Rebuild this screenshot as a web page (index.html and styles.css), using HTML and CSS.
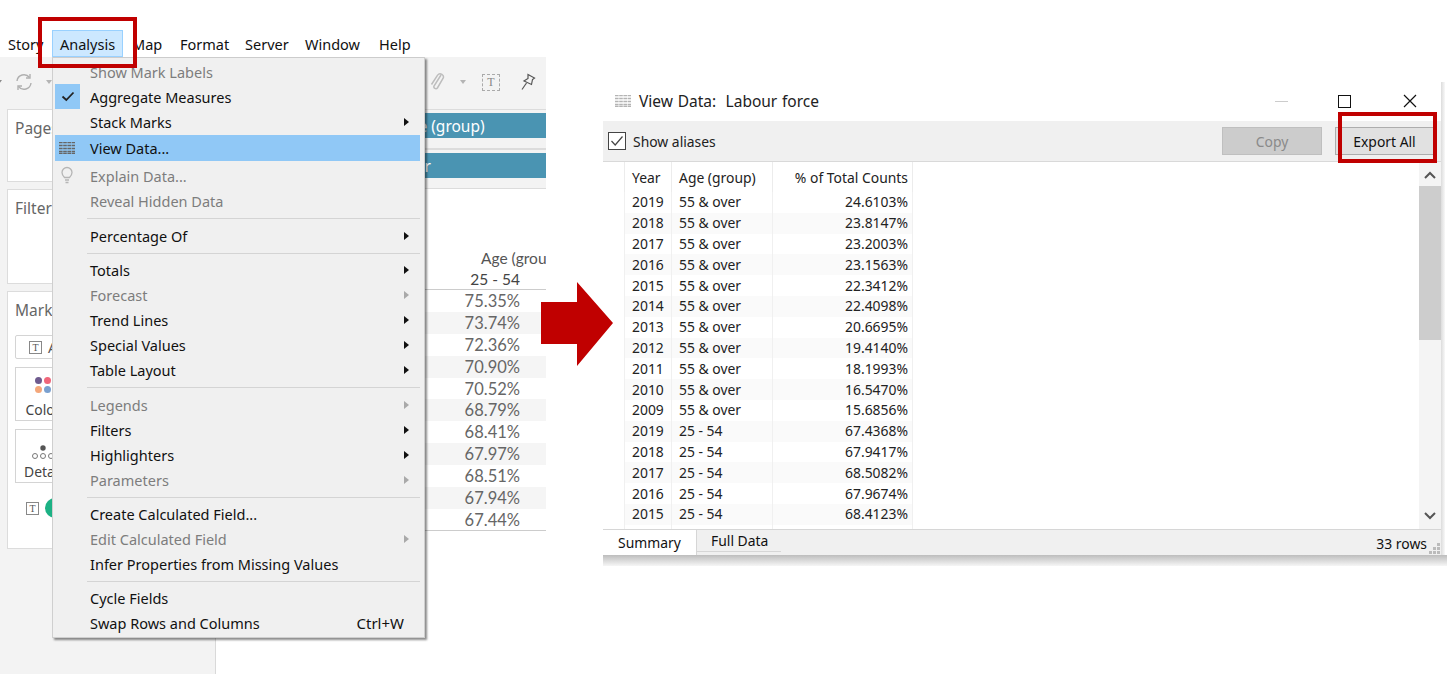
FILE: index.html
```html
<!DOCTYPE html>
<html lang="en">
<head>
<meta charset="utf-8">
<title>View Data</title>
<link rel="stylesheet" href="styles.css">
</head>
<body>
<div class="canvas">

  <section class="app">
    <nav class="menubar">
      <span class="mb-item mb-story">Story</span>
      <span class="mb-item mb-active">Analysis</span>
      <span class="mb-item mb-map">Map</span>
      <span class="mb-item mb-format">Format</span>
      <span class="mb-item mb-server">Server</span>
      <span class="mb-item mb-window">Window</span>
      <span class="mb-item mb-help">Help</span>
    </nav>
    <div class="toolbar">
      <div class="tb-left">
        <svg class="caret caret-a" width="6" height="4" viewBox="0 0 6 4"><path d="M0 0h6L3 4z" fill="#8a8a8a"/></svg>
        <svg class="refresh" width="20" height="20" viewBox="0 0 20 20" fill="none" stroke="#b0b0b0" stroke-width="1.4"><path d="M3 9a7 7 0 0 1 12.500-3.500M17 11a7 7 0 0 1-12.500 3.500"/><path d="M16 2v4h-4M4 18v-4h4"/></svg>
        <svg class="caret" width="6" height="4" viewBox="0 0 6 4"><path d="M0 0h6L3 4z" fill="#b4b4b4"/></svg>
      </div>
      <div class="tb-right">
        <svg class="clip" width="16" height="20" viewBox="0 0 16 20" fill="none" stroke="#bdbdbd" stroke-width="1.5"><path d="M12 3 5 14a2 2 0 0 0 3.400 2L14 6.500a3.200 3.200 0 0 0-5.400-3.400L2.500 12.500"/></svg>
        <svg class="caret caret-b" width="6" height="4" viewBox="0 0 6 4"><path d="M0 0h6L3 4z" fill="#b4b4b4"/></svg>
        <span class="t-box">T</span>
        <svg class="pin" width="16" height="18" viewBox="0 0 16 18" fill="#f3f3f3" stroke="#555" stroke-width="1.200"><path d="M8 1.500 14.500 5 12.500 6.500 11.500 11.500 4 8 8 5.500z"/><path d="M6.500 10 2 16.500"/></svg>
      </div>
    </div>
    <div class="workspace">
      <aside class="side">
        <div class="card card-pages"><span class="card-title">Pages</span></div>
        <div class="card card-filters"><span class="card-title">Filters</span></div>
        <div class="card card-marks">
          <span class="card-title">Marks</span>
          <div class="mark-select"><span class="t-mini">T</span><span>Automatic</span></div>
          <div class="mark-tile">
            <span class="dots"><i class="d1"></i><i class="d2"></i><i class="d3"></i><i class="d4"></i></span>
            <span class="tile-label">Color</span>
          </div>
          <div class="mark-tile">
            <svg class="detail-ic" width="24" height="18" viewBox="0 0 24 18"><circle cx="12" cy="4" r="2.700" fill="#555"/><g fill="none" stroke="#777"><circle cx="4" cy="12" r="2.500"/><circle cx="12" cy="12" r="2.500"/><circle cx="20" cy="12" r="2.500"/></g></svg>
            <span class="tile-label">Detail</span>
          </div>
          <div class="mark-pill"><span class="t-mini">T</span><span class="pill"></span></div>
        </div>
      </aside>
      <div class="view">
        <div class="shelf shelf-first"><div class="pill-teal">Age (group)</div></div>
        <div class="shelf"><div class="pill-teal">Year</div></div>
        <div class="viz">
          <div class="viz-head"><span class="viz-group">Age (group)</span></div>
          <div class="viz-sub">25 - 54</div>
          <div class="viz-row">75.35%</div>
          <div class="viz-row">73.74%</div>
          <div class="viz-row">72.36%</div>
          <div class="viz-row">70.90%</div>
          <div class="viz-row">70.52%</div>
          <div class="viz-row">68.79%</div>
          <div class="viz-row">68.41%</div>
          <div class="viz-row">67.97%</div>
          <div class="viz-row">68.51%</div>
          <div class="viz-row">67.94%</div>
          <div class="viz-row">67.44%</div>
        </div>
      </div>
    </div>
  </section>

  <div class="menu">
    <div class="mi dis">Show Mark Labels</div>
    <div class="mi"><span class="check"><svg width="14" height="11" viewBox="0 0 14 11" fill="none" stroke="#222" stroke-width="1.800"><path d="M1.500 5.500 5.300 9 12.500 1.500"/></svg></span>Aggregate Measures</div>
    <div class="mi sub">Stack Marks</div>
    <div class="mi hl"><svg class="mi-ic" width="16" height="12" viewBox="0 0 16 12"><path d="M0 .5h16M0 3.500h16M0 6.500h16M0 9.500h16M0 11.500h16" stroke="#666" stroke-width="1.400" stroke-dasharray="3.600 .6"/></svg>View Data...</div>
    <div class="mi dis mi-after"><svg class="mi-ic bulb" width="12" height="18" viewBox="0 0 12 18" fill="none" stroke="#b5b5b5" stroke-width="1.300"><path d="M3.500 11.500C2 10 1 8.800 1 6.500a5 5 0 0 1 10 0c0 2.300-1 3.500-2.500 5z"/><path d="M4 14h4M4.500 16.500h3"/></svg>Explain Data...</div>
    <div class="mi dis">Reveal Hidden Data</div>
    <hr class="sep">
    <div class="mi sub">Percentage Of</div>
    <hr class="sep sep-tight">
    <div class="mi sub">Totals</div>
    <div class="mi dis sub">Forecast</div>
    <div class="mi sub">Trend Lines</div>
    <div class="mi sub">Special Values</div>
    <div class="mi sub">Table Layout</div>
    <hr class="sep">
    <div class="mi dis sub">Legends</div>
    <div class="mi sub">Filters</div>
    <div class="mi sub">Highlighters</div>
    <div class="mi dis sub">Parameters</div>
    <hr class="sep sep-tight">
    <div class="mi">Create Calculated Field...</div>
    <div class="mi dis sub">Edit Calculated Field</div>
    <div class="mi">Infer Properties from Missing Values</div>
    <hr class="sep sep-tight">
    <div class="mi">Cycle Fields</div>
    <div class="mi"><span>Swap Rows and Columns</span><span class="shortcut">Ctrl+W</span></div>
  </div>

  <section class="dialog">
    <header class="dlg-title">
      <svg class="dlg-ic" width="16" height="12" viewBox="0 0 16 12"><path d="M0 .5h16M0 3.500h16M0 6.500h16M0 9.500h16M0 11.500h16" stroke="#b4b4b4" stroke-width="1.400" stroke-dasharray="3.600 .6"/></svg>
      <span class="dlg-name">View Data:&nbsp; Labour force</span>
      <div class="win-ctrls">
        <span class="win-min"></span>
        <span class="win-max"></span>
        <svg class="win-close" width="14" height="14" viewBox="0 0 14 14" stroke="#111" stroke-width="1.200"><path d="M1 1l12 12M13 1 1 13"/></svg>
      </div>
    </header>
    <div class="dlg-bar">
      <span class="cb"><svg width="14" height="12" viewBox="0 0 14 12" fill="none" stroke="#444" stroke-width="1.200"><path d="M1.500 6 5.200 10 12.500 1.500"/></svg></span>
      <span class="cb-label">Show aliases</span>
      <button class="btn btn-copy" type="button">Copy</button>
      <button class="btn btn-export" type="button">Export All</button>
    </div>
    <div class="dlg-body">
      <div class="table-wrap">
        <table class="data">
          <thead>
            <tr><th class="c1">Year</th><th class="c2">Age (group)</th><th class="c3">% of Total Counts</th></tr>
          </thead>
          <tbody>
            <tr><td>2019</td><td>55 &amp; over</td><td>24.6103%</td></tr>
            <tr><td>2018</td><td>55 &amp; over</td><td>23.8147%</td></tr>
            <tr><td>2017</td><td>55 &amp; over</td><td>23.2003%</td></tr>
            <tr><td>2016</td><td>55 &amp; over</td><td>23.1563%</td></tr>
            <tr><td>2015</td><td>55 &amp; over</td><td>22.3412%</td></tr>
            <tr><td>2014</td><td>55 &amp; over</td><td>22.4098%</td></tr>
            <tr><td>2013</td><td>55 &amp; over</td><td>20.6695%</td></tr>
            <tr><td>2012</td><td>55 &amp; over</td><td>19.4140%</td></tr>
            <tr><td>2011</td><td>55 &amp; over</td><td>18.1993%</td></tr>
            <tr><td>2010</td><td>55 &amp; over</td><td>16.5470%</td></tr>
            <tr><td>2009</td><td>55 &amp; over</td><td>15.6856%</td></tr>
            <tr><td>2019</td><td>25 - 54</td><td>67.4368%</td></tr>
            <tr><td>2018</td><td>25 - 54</td><td>67.9417%</td></tr>
            <tr><td>2017</td><td>25 - 54</td><td>68.5082%</td></tr>
            <tr><td>2016</td><td>25 - 54</td><td>67.9674%</td></tr>
            <tr><td>2015</td><td>25 - 54</td><td>68.4123%</td></tr>
            <tr><td></td><td></td><td></td></tr>
          </tbody>
        </table>
      </div>
      <div class="scroll">
        <svg class="sc-arrow" width="12" height="8" viewBox="0 0 12 8" fill="none" stroke="#555" stroke-width="2"><path d="M1 7l5-5 5 5"/></svg>
        <div class="sc-thumb"></div>
        <svg class="sc-arrow sc-down" width="12" height="8" viewBox="0 0 12 8" fill="none" stroke="#555" stroke-width="2"><path d="M1 1l5 5 5-5"/></svg>
      </div>
    </div>
    <footer class="dlg-foot">
      <span class="tab tab-on">Summary</span>
      <span class="tab tab-off">Full Data</span>
      <span class="rows">33 rows</span>
      <svg class="grip" width="11" height="11" viewBox="0 0 11 11" fill="#bbb"><path d="M8 0h3v3H8zM4 4h3v3H4zM8 4h3v3H8zM0 8h3v3H0zM4 8h3v3H4zM8 8h3v3H8z"/></svg>
    </footer>
  </section>

  <svg class="arrow" width="72" height="84" viewBox="0 0 72 84"><path d="M0 20h36V0l36 41-36 43V62H0z" fill="#c00000"/></svg>

  <div class="redbox redbox-menu"></div>
  <div class="redbox redbox-export"></div>
</div>
</body>
</html>
```
FILE: styles.css
```css
* { box-sizing: border-box; }
html, body { margin: 0; padding: 0; background: #fff; }
body { width: 1447px; height: 674px; overflow: hidden; font-family: "Noto Sans", "Open Sans", sans-serif; color: #111; }
.canvas { position: relative; width: 1447px; height: 674px; overflow: hidden; }

/* left application window */
.app { position: absolute; left: 0; top: 30px; width: 546px; height: 644px; display: flex; flex-direction: column; overflow: hidden; background: #fff; }
.menubar { height: 27px; display: flex; align-items: center; font-size: 14.5px; flex: none; }
.mb-item { line-height: 28px; white-space: nowrap; }
.mb-story { margin-left: 8px; width: 44px; }
.mb-active { width: 71px; padding-left: 7px; background: #cce8ff; border: 1px solid #99d1ff; line-height: 26px; height: 27px; }
.mb-map { margin-left: 9px; width: 48px; }
.mb-format { width: 65px; }
.mb-server { width: 60px; }
.mb-window { width: 74px; }

.toolbar { height: 52px; flex: none; background: #f3f3f3; display: flex; justify-content: space-between; align-items: center; padding-bottom: 2px; }
.tb-left { display: flex; align-items: center; gap: 12px; margin-left: -4px; }
.tb-right { display: flex; align-items: center; margin-right: 10px; }
.clip { margin-right: 15px; }
.caret-b { margin-right: 16px; }
.t-box { width: 18px; height: 17px; border: 1px dashed #aaa; font: 12px/15px "Liberation Serif", serif; text-align: center; color: #888; margin-right: 20px; }

.workspace { flex: 1; display: flex; min-height: 0; }
.side { width: 216px; flex: none; background: #f3f3f3; border-right: 1px solid #d9d9d9; padding: 0 0 0 7px; display: flex; flex-direction: column; gap: 7px; }
.card { background: #fff; border: 1px solid #dcdcdc; padding: 8px 7px; font-size: 14.5px; color: #555; }
.card-title { display: block; line-height: 20px; font-size: 15.5px; color: #666; }
.card-pages { height: 73px; }
.card-filters { height: 95px; }
.card-marks { height: 258px; }
.mark-select { margin-top: 15px; height: 24px; width: 190px; border: 1px solid #d4d4d4; border-radius: 2px; display: flex; align-items: center; gap: 6px; padding-left: 13px; }
.t-mini { width: 13px; height: 13px; border: 1px solid #888; font: 10px/11px "Liberation Serif", serif; text-align: center; color: #555; display: block; }
.mark-tile { width: 56px; height: 54px; margin-top: 8px; border: 1px solid #d4d4d4; display: flex; flex-direction: column; align-items: center; justify-content: flex-end; color: #444; }
.dots { display: grid; grid-template-columns: 7px 7px; gap: 2px; margin: 0 0 7px; }
.dots i { width: 7px; height: 7px; border-radius: 50%; display: block; }
.d1 { background: #6e5a8e; } .d2 { background: #f0667a; } .d3 { background: #f4a77a; } .d4 { background: #7aa0cf; }
.tile-label { line-height: 20px; font-size: 13.9px; }
.mark-pill { margin-top: 15px; margin-left: 11px; display: flex; align-items: center; gap: 6px; }
.pill { width: 60px; height: 20px; border-radius: 10px; background: #1cb184; display: block; }

.view { flex: 1; min-width: 0; display: flex; flex-direction: column; }
.shelf { height: 39px; background: #f3f3f3; border-top: 1px solid #dcdcdc; border-bottom: 1px solid #dcdcdc; padding-top: 3px; flex: none; }
.shelf + .shelf { height: 40px; }
.shelf-first { height: 40px; padding-top: 3px; }
.pill-teal { height: 25px; background: #4a94b2; color: #fff; font-size: 15.5px; line-height: 26px; margin-left: 9px; padding-left: 174px; white-space: nowrap; }
.viz { flex: 1; font-family: "Lato", "Open Sans", sans-serif; color: #666; font-size: 16.5px; }
.viz-head { height: 80px; display: flex; align-items: flex-end; padding-left: 265px; color: #555; white-space: nowrap; overflow: hidden; }
.viz-group { line-height: 22px; font-size: 15.5px; }
.viz-sub { width: 100%; height: 21px; line-height: 20px; text-align: right; padding-right: 26px; border-bottom: 1px solid #ccc; color: #444; font-size: 15.5px; }
.viz-row { height: 21.9px; line-height: 22px; text-align: right; padding-right: 26px; }
.viz-row:nth-of-type(even) { background: #f5f5f5; }
.viz-row:last-child { border-bottom: 1px solid #ccc; }

/* Analysis drop-down */
.menu { position: absolute; left: 52px; top: 57px; width: 373px; height: 581px; padding: 2px 4px 0 2px; background: #f0f0f0; border: 1px solid #cfcfcf; border-top-color: #ccc; box-shadow: 2px 2px 2px rgba(0,0,0,.45); font-size: 14.5px; }
.mi { position: relative; height: 25px; line-height: 25px; padding-left: 35px; white-space: nowrap; display: flex; align-items: center; }
.mi.dis { color: #7d7d7d; }
.mi.sub::after { content: ""; position: absolute; right: 11px; top: 8px; border-left: 5px solid #111; border-top: 4px solid transparent; border-bottom: 4px solid transparent; }
.mi.dis.sub::after { border-left-color: #a9a9a9; }
.hl { background: #90c8f6; height: 26px; margin-bottom: 3px; }
.check { position: absolute; left: 0; top: -1px; width: 25px; height: 25px; background: #90c8f6; display: flex; align-items: center; justify-content: center; }
.mi-ic { position: absolute; left: 4px; top: 7px; }
.mi-ic.bulb { left: 6px; top: 2px; }
.sep { height: 1px; border: 0; background: #d4d4d4; margin: 4px 0 5px 32px; }
.sep-tight { margin-bottom: 4px; }
.shortcut { margin-left: auto; margin-right: 16px; font-size: 15px; }

.arrow { position: absolute; left: 541px; top: 282px; }

/* View Data dialog */
.dialog { position: absolute; left: 603px; top: 82px; width: 840px; height: 474px; display: flex; flex-direction: column; background: #fff; border-right: 2px solid #a0a0a0; border-bottom: 1px solid #777; font-size: 13.9px; }
.dialog::after { content: ""; position: absolute; left: 0; right: -6px; top: 100%; height: 11px; background: linear-gradient(#bdbdbd, #f6f6f6); }
.dialog::before { content: ""; position: absolute; left: 100%; top: 0; bottom: 0; width: 4px; background: linear-gradient(90deg, #dcdcdc, #f8f8f8); }
.dlg-title { height: 39px; flex: none; display: flex; align-items: center; padding: 0 0 1px 12px; font-size: 15.5px; }
.dlg-name { margin-left: 8px; color: #222; word-spacing: .7px; }
.win-ctrls { margin-left: auto; display: flex; align-items: center; margin-right: 24px; }
.win-min { width: 13px; height: 1px; background: #ccc; display: block; margin-right: 50px; }
.win-max { width: 13px; height: 13px; border: 1.5px solid #111; display: block; margin-right: 52px; }
.dlg-bar { height: 41px; flex: none; background: #f0f0f0; border-bottom: 1px solid #d9d9d9; display: flex; align-items: center; padding-left: 5px; }
.cb { width: 18px; height: 18px; border: 1.5px solid #444; background: #fff; display: flex; align-items: center; justify-content: center; }
.cb-label { margin-left: 7px; color: #222; }
.btn { height: 28px; width: 100px; font: inherit; padding: 0; }
.btn-copy { margin-left: auto; background: #cccccc; border: 1px solid #bfbfbf; color: #8a8a8a; }
.btn-export { width: 99px; margin-left: 13px; margin-right: 7px; background: #e1e1e1; border: 1px solid #adadad; color: #111; }
.dlg-body { flex: 1; min-height: 0; display: flex; }
.table-wrap { flex: 1; min-width: 0; overflow: hidden; padding-left: 21px; }
.data { border-collapse: separate; border-spacing: 0; table-layout: fixed; width: 289px; color: #222; }
.data th { font-weight: 400; height: 30px; padding: 6px 4px 2px 7px; text-align: left; border-left: 1px solid #ececec; white-space: nowrap; line-height: 20px; vertical-align: top; }
.data .c1 { width: 47px; }
.data .c2 { width: 101px; }
.data .c3 { width: 141px; text-align: right; border-right: 1px solid #ececec; }
.data td { height: 20.8px; padding: 0 4px 0 7px; border-left: 1px solid #f0f0f0; white-space: nowrap; line-height: 20px; }
.data td:last-child { text-align: right; border-right: 1px solid #f0f0f0; }
.data tbody tr:nth-child(even) td { background: #fafafa; }
.scroll { width: 22px; flex: none; background: #f4f4f4; display: flex; flex-direction: column; align-items: center; padding-top: 9px; }
.sc-thumb { width: 22px; height: 154px; background: #cdcdcd; margin-top: 7px; }
.sc-arrow { display: block; flex: none; }
.sc-down { margin-top: auto; margin-bottom: 9px; }
.dlg-foot { height: 26px; flex: none; background: #f0f0f0; border-top: 1px solid #d6d6d6; display: flex; align-items: flex-start; position: relative; }
.tab { display: block; white-space: nowrap; }
.tab-on { width: 94px; height: 25px; background: #fff; line-height: 25px; padding-left: 15px; border-right: 1px solid #d6d6d6; }
.tab-off { width: 84px; height: 22px; line-height: 22px; padding-left: 14px; border-bottom: 1px solid #d6d6d6; }
.rows { margin-left: auto; margin-right: 14px; line-height: 27px; }
.grip { position: absolute; right: 1px; bottom: 1px; }

.redbox { position: absolute; border: 4px solid #c00000; }
.redbox-menu { left: 38px; top: 17px; width: 99px; height: 51px; }
.redbox-export { left: 1338px; top: 112px; width: 99px; height: 51px; }
```
